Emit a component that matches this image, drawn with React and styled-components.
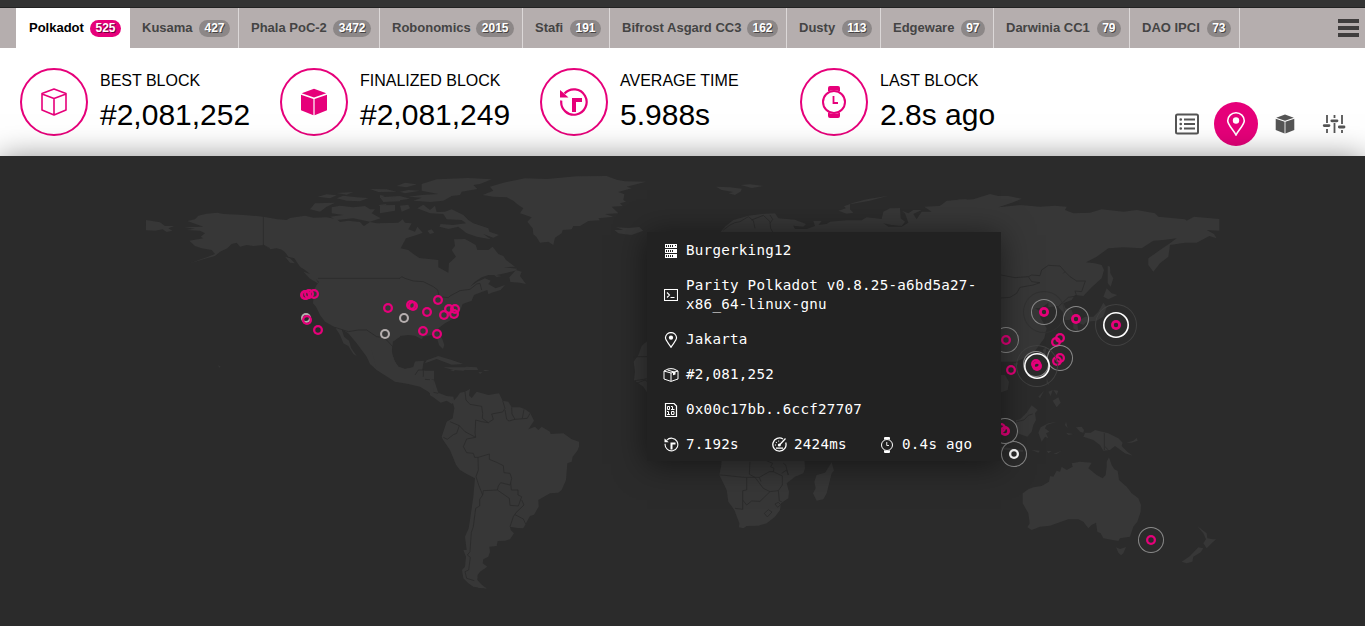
import React from "react";
import styled, { createGlobalStyle, css } from "styled-components";

const PINK = "#e6007a";

const GlobalStyle = createGlobalStyle`
  * { box-sizing: border-box; }
  body {
    margin: 0;
    background: #2b2b2b;
    color: #000;
    font-family: "Liberation Sans", Arial, sans-serif;
    overflow: hidden;
  }
`;

const Page = styled.div`
  display: flex;
  flex-direction: column;
  height: 626px;
  overflow: hidden;
`;

const TopStrip = styled.div`
  flex: 0 0 8px;
  background: #333;
  border-bottom: 1px solid #222;
`;

const ChainBar = styled.nav`
  flex: 0 0 40px;
  display: flex;
  align-items: stretch;
  padding: 0 6px 0 16px;
  background: #b5aeae;
`;

const ChainTab = styled.div`
  display: flex;
  align-items: center;
  justify-content: space-between;
  width: ${(p) => p.$width}px;
  padding: 0 8px 0 12px;
  border-right: 1px solid ${(p) => (p.$active ? "#fff" : "#dcd8d8")};
  background: ${(p) => (p.$active ? "#fff" : "transparent")};
  color: ${(p) => (p.$active ? "#000" : "#444")};
  font-size: 13px;
  font-weight: 700;
  white-space: nowrap;
  ${(p) => p.$active && css`padding-left: 13px;`}
`;

const ChainName = styled.span`
  position: relative;
  top: -1px;
`;

const Count = styled.span`
  height: 17px;
  padding: 0 5.5px;
  border-radius: 9px;
  background: ${(p) => (p.$active ? PINK : "#8c8787")};
  color: #fff;
  font-size: 12px;
  line-height: 16px;
  text-shadow: 1px 1px 0 rgba(0, 0, 0, 0.5);
`;

const MenuButton = styled.div`
  display: flex;
  flex-direction: column;
  justify-content: center;
  gap: 3px;
  width: 21px;
  margin-left: auto;
`;

const MenuLine = styled.span`
  height: 4px;
  background: #3f3d3d;
`;

const Header = styled.header`
  flex: 0 0 108px;
  display: flex;
  align-items: flex-start;
  padding: 20px 9px 0 20px;
  background: #fff;
`;

const Stat = styled.div`
  display: flex;
  gap: 12px;
  width: 260px;
`;

const StatIcon = styled.div`
  display: flex;
  align-items: center;
  justify-content: center;
  width: 68px;
  height: 68px;
  border: 2px solid ${PINK};
  border-radius: 50%;
  color: ${PINK};
`;

const StatText = styled.div`
  padding-top: 4px;
`;

const StatLabel = styled.div`
  font-size: 16px;
  line-height: 18px;
  text-transform: uppercase;
`;

const StatValue = styled.div`
  margin-top: 8px;
  font-size: 30px;
  line-height: 34px;
`;

const ViewTabs = styled.div`
  display: flex;
  gap: 5px;
  margin: 34px 0 0 auto;
`;

const ViewTab = styled.div`
  display: flex;
  align-items: center;
  justify-content: center;
  width: 44px;
  height: 44px;
  border-radius: 50%;
  background: ${(p) => (p.$active ? PINK : "transparent")};
  color: ${(p) => (p.$active ? "#fff" : "#555")};
`;

const MapArea = styled.main`
  position: relative;
  flex: 1;
  background: #2b2b2b;
  box-shadow: rgba(0, 0, 0, 0.5) 0 3px 30px;
`;

const WorldMap = styled.svg`
  display: block;
  width: 1365px;
  height: 470px;
`;

const PIN_COLORS = { gray: "#b5aeae", white: "#fff", pink: PINK };

const Pin = styled.div`
  position: absolute;
  left: ${(p) => p.$x - 5}px;
  top: ${(p) => p.$y - 161}px;
  width: 10px;
  height: 10px;
  border-radius: 50%;
  box-shadow: inset 0 0 0 ${(p) => p.$line}px ${(p) => PIN_COLORS[p.$tone]};
`;

const Pulse = styled.span`
  position: absolute;
  inset: ${(p) => 5 - p.$r}px;
  border-radius: 50%;
  box-shadow: inset 0 0 0 ${(p) => p.$line}px ${(p) => p.$color};
`;

const Details = styled.section`
  position: absolute;
  left: 647px;
  top: 76px;
  width: 354px;
  background: #222;
  color: #fff;
  box-shadow: rgba(0, 0, 0, 0.5) 0 3px 30px;
  font-family: "DejaVu Sans Mono", monospace;
  font-size: 14.2px;
  letter-spacing: 0.26px;
  line-height: 19px;
`;

const DetailRow = styled.div`
  display: flex;
  align-items: center;
  padding: 9px 0 7px 17px;
`;

const DetailCell = styled.div`
  display: flex;
  flex: none;
  align-items: center;
  gap: 8px;
  width: ${(p) => (p.$wide ? "100%" : "108px")};
  white-space: nowrap;
`;

const IconSlot = styled.span`
  display: flex;
  flex: 0 0 14px;
  min-width: 0;
  align-items: center;
  justify-content: center;
  height: 16px;
`;

const Icon = styled.svg`
  flex: none;
  fill: none;
  stroke: currentColor;
`;

const Glyph = ({ size, view = 16, children }) => (
  <Icon width={size} height={size} viewBox={`0 0 ${view} ${view}`}>{children}</Icon>
);

const CubeOutline = () => (
  <Glyph size={28} view={28}>
    <path strokeWidth="1.6" strokeLinejoin="round" d="M14 1 26 5.5V22L14 27 2 22V5.5ZM2 6l12 4.500L26 6M14 10.500V27" />
  </Glyph>
);

const CubeSolid = ({ size = 28 }) => (
  <Glyph size={size} view={28}>
    <path fill="currentColor" stroke="none" d="M14 .8 26.300 5.300 14 9.600 1.700 5.300ZM1 6.700 13.400 11V27.300L1 22.300ZM27 6.700 14.600 11V27.300L27 22.300Z" />
  </Glyph>
);

const AverageIcon = ({ size = 30 }) => (
  <Glyph size={size} view={30}>
    <path strokeWidth="2.200" d="M5.500 6.500A12.700 12.700 0 1 1 2.300 13.500" />
    <path fill="currentColor" stroke="none" d="M1 3 4 5.500 9.500 10.500H1ZM13 11H23V15H17V25H13Z" />
  </Glyph>
);

const WatchIcon = ({ size = 32 }) => (
  <Glyph size={size} view={32}>
    <circle cx="16" cy="16" r="11" strokeWidth="2" />
    <path strokeWidth="1.800" d="M15.500 10V17H20" />
    <path fill="currentColor" stroke="none" d="M10 5.500V2Q10 0 12 0H20Q22 0 22 2V5.500Q16 2.500 10 5.500ZM10 26.500V30Q10 32 12 32H20Q22 32 22 30V26.500Q16 29.500 10 26.500Z" />
  </Glyph>
);

const ListIcon = () => (
  <Glyph size={24} view={24}>
    <rect x="1" y="2.500" width="22" height="19" rx="1.500" strokeWidth="2" />
    <path strokeWidth="2" d="M9 7.500H20M9 12H20M9 16.500H20" />
    <path strokeWidth="2.600" strokeLinecap="round" d="M5.700 7.500H5.800M5.700 12H5.800M5.700 16.500H5.800" />
  </Glyph>
);

const PinIcon = ({ size, line = 1.6 }) => (
  <Glyph size={size} view={24}>
    <path strokeWidth={line} d="M12 23C10 18.500 3.700 13 3.700 8.800A8.300 8 0 0 1 20.300 8.800C20.300 13 14 18.500 12 23Z" />
    <circle cx="12" cy="8.500" r="3.200" fill="currentColor" stroke="none" />
  </Glyph>
);

const SettingsIcon = () => (
  <Glyph size={24} view={24}>
    <path strokeWidth="1.800" d="M5 3V11M5 17V21M12.500 3V6M12.500 11V21M20 3V12M20 18V21" />
    <path strokeWidth="2.800" strokeLinecap="round" d="M2.200 13.600H7M9.800 8.800H15M17.300 15H22" />
  </Glyph>
);

const ServerIcon = () => (
  <Glyph size={14} view={14}>
    <path fill="currentColor" stroke="none" d="M1 0H13V4H1ZM1 5H13V9H1ZM1 10H13V14H1Z" />
    <path stroke="#222" strokeWidth="2" strokeDasharray="1 1" d="M2 2H9M2 7H9M2 12H9" />
    <path stroke="#222" strokeWidth="1" d="M11 1.500H12" />
  </Glyph>
);

const TerminalIcon = () => (
  <Glyph size={14} view={14}>
    <path strokeWidth="1.100" d="M.5 1.500H13.500V12.500H.5ZM3 4.500 5.500 7 3 9.500M6.500 9.500H10.500" />
  </Glyph>
);

const PackageIcon = () => (
  <Icon width="16" height="14" viewBox="0 0 16 14">
    <path d="M1 3 8 5 15 3V11L8 13.400 1 11ZM1 3 5 1 8 .6 11 1 15 3M8 5V13M4.500 2 11 4" />
    <path fill="currentColor" stroke="none" d="M10 4 12.500 3.300V6.500L10 7.300Z" />
  </Icon>
);

const BinaryIcon = () => (
  <Glyph size={14} view={14}>
    <path strokeWidth="1.200" d="M1.500.5H10L12.500 3V13.500H1.500Z" />
    <path strokeWidth="1" d="M3.500 3.500H5.500V6.500H3.500ZM7 3.500H8.500V7M7 6.500H10.500M3 8.500H4.500V12M3 11.500H6M7.500 8.500H10V11.500H7.500Z" />
  </Glyph>
);

const GaugeIcon = () => (
  <Glyph size={15} view={15}>
    <path strokeWidth="1.300" d="M11 2A6.600 6.600 0 1 0 13.700 5.500M4 11.200H11M7.500 8 13.500 1.500" />
    <circle cx="7.300" cy="8" r="1.500" fill="currentColor" stroke="none" />
    <path strokeWidth="1.200" strokeDasharray="1 1.700" d="M3.500 8.500A4 4 0 0 1 9 4.300" />
  </Glyph>
);

const CHAINS = [
  ["Polkadot", 525, 114], ["Kusama", 427, 109], ["Phala PoC-2", 3472, 141],
  ["Robonomics", 2015, 143], ["Stafi", 191, 87], ["Bifrost Asgard CC3", 162, 177],
  ["Dusty", 113, 94], ["Edgeware", 97, 113], ["Darwinia CC1", 79, 136], ["DAO IPCI", 73, 110],
];

const STATS = [
  ["Best Block", "#2,081,252", <CubeOutline />],
  ["Finalized Block", "#2,081,249", <CubeSolid />],
  ["Average Time", "5.988s", <AverageIcon />],
  ["Last Block", "2.8s ago", <WatchIcon />],
];

// Each region has its own origin; its outlines use three units per pixel.
const REGIONS = [
  { x: 140, y: 170,
    land: [
      "M18 150 60 157 75 168 103 168 85 175 97 182 80 186 68 178 45 182 18 181Z",
      "M142 153 165 148 175 137 200 131 232 128 250 132 300 134 370 140 412 148 440 150 450 144 495 137 520 143 560 142 590 148 600 156 625 152 660 156 668 165 672 168 690 156 710 160 780 162 780 500 758 515 755 548 765 575 775 592 780 600 710 600 690 582 680 560 650 520 625 490 605 478 612 500 627 512 634 535 650 558 640 552 625 528 610 520 600 495 585 472 555 455 540 435 528 410 519 400 522 360 530 345 537 336 518 318 495 300 480 290 463 265 445 260 430 240 410 235 390 238 370 225 340 228 320 225 300 230 290 218 275 222 262 235 240 245 225 258 200 265 150 280 200 262 225 252 215 240 185 235 165 228 148 212 190 205 182 200 195 190 180 182 138 180 165 176 132 172 190 170Z",
      "M510 118 525 100 585 98 560 110 540 125ZM575 112 600 107 640 112 675 108 690 118 705 118 695 130 722 145 690 155 640 145 590 150 570 140 610 135 575 130ZM533 80 560 73 590 76 570 85ZM590 85 610 77 650 82 685 84 660 94 620 92ZM590 69 640 66 620 74ZM690 57 740 58 770 65 715 66ZM720 82 780 78 780 94 730 96ZM715 105 740 102 730 115Z",
      "M412 230 435 235 455 252 440 250ZM435 260 450 265 465 280 450 278ZM490 305 520 315 537 342 510 326ZM235 586 242 590 237 593Z",
    ],
    line: "M370 140V225L390 236M534 325H780M585 472 625 485 655 480 680 480 710 500 725 502 740 525 755 530" },
  { x: 380, y: 170,
    land: [
      "M0 160 55 158 68 148 75 158 95 160 85 178 105 185 112 170 128 188 110 195 78 205 62 235 85 240 100 252 118 264 175 270 175 292 205 308 207 280 228 260 215 240 225 228 222 208 255 207 270 215 287 225 292 240 325 240 338 230 355 252 370 258 378 270 405 290 371 292 412 296 405 302 375 310 350 315 325 315 305 322 285 335 270 350 292 335 315 325 332 332 325 342 347 355 375 345 362 360 335 368 325 373 322 360 305 366 282 375 275 392 248 402 242 418 230 440 195 460 175 475 175 490 187 507 193 525 189 537 177 525 170 500 155 495 130 500 125 508 105 497 85 495 60 498 38 515 35 550 45 575 55 590 75 597 100 592 105 575 132 572 125 600 0 600Z",
      "M308 75 340 62 330 50 370 38 435 25 500 27 590 19 680 18 710 29 735 34 798 35 740 50 755 55 715 66 733 73 730 90 738 95 720 100 728 108 695 110 715 130 675 132 700 140 655 145 660 151 625 153 600 168 580 168 575 178 548 180 545 190 525 203 520 225 505 215 480 218 470 202 460 193 458 175 442 155 455 142 420 130 430 115 415 105 400 92 380 82 340 80Z",
      "M125 42 170 28 265 24 335 28 300 42 280 45 292 57 245 65 240 75 215 78 190 92 150 96 100 92 125 83 85 80 125 75 175 72 125 62ZM50 48 75 38 110 43 80 52ZM60 65 85 60 120 62 75 70ZM30 85 60 78 90 86 50 92ZM0 75 15 78 0 85ZM0 106 45 105 45 122 0 130ZM60 107 85 104 90 115 65 125ZM112 115 130 104 150 120 165 107 170 126 195 125 215 118 250 135 265 150 280 160 325 175 328 185 357 195 340 203 310 192 332 208 290 200 260 190 235 170 205 177 178 170 182 162 220 165 258 160 245 150 200 148 190 132 150 130ZM142 182 155 178 163 188 150 192Z",
      "M703 180 730 180 708 172 745 174 778 171 790 182 755 195 730 192 715 190Z",
      "M391 336 388 322 408 300 425 305 420 318 438 342 420 338ZM342 314 364 318 350 321ZM140 571 175 558 215 570 250 582 215 584 170 567 135 580ZM258 590 290 592 295 600 250 600Z",
    ],
    line: "M0 325H60L65 320 75 325 100 333 130 335 160 350 173 360 178 380 205 383 210 378 240 362 270 358 290 342 300 340 305 360M0 495 20 510 38 530" },
  { x: 360, y: 350,
    land: [
      "M35 0H95L100 28 115 50 135 57 160 52 165 35 190 32 187 60 195 62 222 62 222 90 235 128 260 138 280 140 283 155 255 150 225 145 205 125 180 110 145 102 105 95 50 60ZM250 52 330 52 310 62 280 60ZM275 64 292 68ZM355 66 368 67 360 72Z",
    ],
    line: "M165 75 175 60 190 60 190 80M222 90 195 88M220 127 235 130M240 145 250 150" },
  { x: 430, y: 370,
    land: [
      "M0 25 12 32 10 68 28 80 40 82 60 80 72 95 66 102 50 92 32 98 10 82 0 76Z",
      "M68 95 82 80 90 68 105 65 120 57 117 76 125 84 140 65 175 75 207 70 218 92 235 95 245 112 270 112 285 118 300 128 312 152 295 178 315 170 325 180 335 170 360 185 362 192 400 190 425 208 447 215 447 230 442 242 428 260 425 275 412 280 408 330 395 360 385 368 360 370 325 390 326 410 312 434 300 438 288 460 280 475 263 474 240 470 242 480 252 490 240 508 225 512 203 513 200 528 178 530 180 545 175 560 160 568 158 580 172 590 150 605 143 615 142 630 153 642 170 656 130 650 115 640 100 625 96 600 105 590 108 560 100 540 110 540 105 500 116 475 120 450 130 380 135 325 110 312 90 300 78 284 60 240 38 208 35 200 50 155 68 145 73 115Z",
      "M60 0 75 0 70 4ZM160 0 180 0 165 4ZM135 634 170 655 145 654Z",
    ],
    line: "M105 65 108 90 120 103 155 109 158 130 157 145 175 158 155 155 137 150 136 175 135 188 137 202 105 185 88 167 60 155M88 167 80 190 70 194 52 208 40 202M137 202 110 207 100 230 110 248 130 250 134 262 145 262 178 252 178 268 200 277 220 287 222 308 240 310 245 325 242 338 240 345 212 338 205 348 202 360 160 362 158 375 146 345 138 320 145 300 144 262M202 360 238 385 240 406 265 408 275 380 264 375 264 360 244 360 242 338M275 390 282 405 258 428 250 440 240 470M255 434 280 447 287 462M158 375 149 388 149 408 137 415 130 470 124 487 120 545 112 555 121 562 116 600 105 605 110 625 133 632M175 158 190 148 185 132 218 126 225 115 218 92M225 120 230 148 237 153 255 148 246 132 245 112M255 148 292 145 300 130M282 118 277 145" },
  { x: 600, y: 330,
    land: ["M145 30 125 48 115 75 101 95 105 125 102 150 130 170 150 200V30Z"],
    line: "M145 80H101M110 160 135 150 150 160M105 152 150 145" },
  { x: 640, y: 440,
    land: [
      "M245 55 244 75 238 105 248 125 260 150 265 185 283 210 298 250 297 262 310 265 320 258 355 257 380 250 405 230 420 210 423 190 445 175 447 155 440 130 465 110 490 100 495 85 493 55Z",
      "M575 67 582 92 575 100 560 160 550 178 530 182 519 160 527 145 523 125 530 105 555 98Z",
    ],
    line: "M238 105 255 106 310 112 358 112 388 95 400 95 402 85 392 80 398 70 375 60M330 65 328 103 345 112M320 114V150L308 152V208L285 205M308 180 320 195 335 183 360 184 390 155 415 152 418 183 425 185M345 112 370 145 390 155M358 112 363 125M400 95 427 108 427 135 415 152M425 100 440 90 445 105 437 75 430 70M373 220 385 209 396 216 382 231ZM405 192 415 187 422 194 413 202Z" },
  { x: 680, y: 170,
    land: [
      "M108 50 150 52 185 56 183 64 165 75 145 70 160 66 125 60ZM182 45 210 43 250 48 215 54Z",
      "M118 190 135 170 160 150 205 137 245 132 285 130 295 145 345 149 378 162 370 170 340 167 345 177 375 177 375 190ZM355 177 380 177 405 168 400 153 425 153 415 165 440 162 450 155 500 151 545 151 560 142 605 147 610 125 630 115 660 114 662 145 675 155 665 168 635 165 610 160 625 170 665 170 685 158 675 130 665 122 685 130 700 120 725 120 700 132 710 148 725 125 755 125 733 110 780 108 800 95 840 88 860 88 860 190H360Z",
      "M475 122 498 115 492 109 520 98 560 88 625 77 570 92 510 103 510 118 520 128 500 131Z",
    ],
    line: "M130 180 150 165 165 158 180 155 205 140 220 152 225 175M215 150 250 136 270 155 272 175 280 190M270 135 278 148 270 160" },
  { x: 940, y: 170,
    land: [
      "M0 108 20 92 100 88 150 72 175 78 205 78 245 86 220 97 175 112 240 105 300 110 345 107 380 110 375 120 400 130 450 128 485 118 550 125 590 120 645 130 655 140 735 148 740 152 762 140 838 147V182L800 180 822 192 830 205 808 198 770 218 735 218 690 225 685 260 660 280 640 305 625 285 625 265 660 240 690 220 710 205 670 210 640 212 605 235 550 232 505 235 470 260 438 277 465 280 485 285 492 300 485 325 455 352 430 378 405 375 395 390 370 400 377 415 395 420 402 440 388 450 375 450 368 425 352 408 325 412 325 398 305 413 285 415 310 430 300 440 320 475 313 505 280 550 240 570 228 575 183 575 0 575Z",
      "M503 287 510 290 511 310 520 325 512 350 503 340ZM500 355 515 370 532 375 505 388 490 380ZM490 398 500 412 490 440 470 452 440 455 430 465 410 456 435 440 460 440 475 425ZM400 455 412 460 415 485 400 475ZM308 540 320 530 315 560ZM220 580 235 580 226 592Z",
    ],
    line: "M183 315 225 323 265 320 275 315 300 317 305 300 325 286 360 288 375 305 390 320 410 333 436 333 425 365 405 363 410 378 385 382 355 410M265 320 275 335 300 338 280 345 240 352 230 370 210 382 183 384M375 305 370 310" },
  { x: 990, y: 370,
    land: [
      "M30 15 45 15 57 35 53 60 30 68ZM78 150 90 148 110 128 125 106 143 120 135 130 138 150 130 165 125 185 112 200 82 190 78 170ZM152 172 175 160 200 155 170 165 165 175 178 185 168 190 175 205 165 200 155 215 145 188ZM258 172 275 170 282 180 280 188 302 188 315 180 355 190 385 205 398 218 395 228 412 245 428 257 405 250 375 228 360 240 340 242 330 225 310 210 280 200 285 190 270 185ZM410 218 430 212 440 204 443 212 425 218ZM30 230 60 234 100 240 98 246 35 238ZM125 240 150 242 145 248ZM170 242 185 244 175 250ZM190 252 215 242 200 252ZM170 25 178 45 170 40ZM188 92 205 82 212 98 200 112ZM175 65 188 60 182 78ZM145 80 162 62 150 85ZM190 60 205 62 200 75ZM228 155 233 175 225 165ZM228 188 250 192 235 195Z",
      "M98 370 115 358 130 352 155 348 177 335 180 318 190 320 200 302 210 305 215 290 230 300 248 290 245 280 270 275 305 278 295 295 320 315 338 325 347 315 350 290 350 275 357 262 365 285 373 298 383 303 387 330 410 350 425 370 445 385 453 405 452 425 442 455 430 470 420 500 390 505 385 513 340 505 332 490 322 485 318 458 305 465 295 475 280 455 265 448 235 448 205 458 180 467 150 470 125 480 112 472 119 460 115 430 98 400Z",
      "M378 532 390 537 408 531 400 550 393 556 385 548ZM622 468 640 482 650 490 652 505 668 508 678 508 665 520 650 535 640 520 648 508 640 490ZM625 532 640 535 632 547 610 560 607 575 590 580 575 575 600 558Z",
    ],
    line: "M343 190V240M80 155 102 150 115 136 128 132M345 230 355 240" },
];

const PINS = [
  { x: 304.5, y: 294.5 }, { x: 306, y: 294.5 }, { x: 309, y: 294 }, { x: 314, y: 294 },
  { x: 306, y: 318, tone: "gray" }, { x: 307, y: 320 }, { x: 318, y: 330 },
  { x: 388, y: 308 }, { x: 385, y: 334, tone: "gray" }, { x: 404, y: 318, tone: "gray" },
  { x: 411, y: 305 }, { x: 413, y: 306 }, { x: 427, y: 312 }, { x: 438, y: 300 },
  { x: 444, y: 315 }, { x: 449, y: 309 }, { x: 455, y: 309 }, { x: 454, y: 314 },
  { x: 423, y: 331 }, { x: 437, y: 334 },
  { x: 1044, y: 312, bold: true, ring: "far" }, { x: 1076, y: 319, bold: true, ring: "near" },
  { x: 1116, y: 325, bold: true, ring: "bright" }, { x: 1060, y: 338 }, { x: 1056, y: 342 },
  { x: 1060, y: 358, ring: "near" }, { x: 1057, y: 361 },
  { x: 1036, y: 364, ring: "near" }, { x: 1037, y: 366, bold: true, ring: "bright" },
  { x: 1011, y: 370 }, { x: 1006, y: 340, ring: "near" },
  { x: 1001, y: 428 }, { x: 1005, y: 431, bold: true, ring: "near" },
  { x: 1014, y: 454, tone: "white", ring: "near" }, { x: 1151, y: 540, ring: "near" },
];

function MapPin({ x, y, tone = "pink", bold, ring }) {
  const bright = ring === "bright";
  return (
    <Pin $x={x} $y={y} $tone={tone} $line={bold ? 2.8 : tone === "gray" ? 2.1 : 2.3}>
      {ring && <Pulse $r={13} $line={bright ? 1.6 : 1} $color={bright ? "#fff" : "#898989"} />}
      {(bright || ring === "far") && <Pulse $r={21} $line={1} $color={bright ? "#414141" : "#313131"} />}
    </Pin>
  );
}

const Detail = ({ icon, wide, children }) => (
  <DetailCell $wide={wide}>
    <IconSlot>{icon}</IconSlot>
    <span>{children}</span>
  </DetailCell>
);

export default function App() {
  return (
    <Page>
      <GlobalStyle />
      <TopStrip />
      <ChainBar>
        {CHAINS.map(([name, count, width], i) => (
          <ChainTab key={name} $width={width} $active={i === 0}>
            <ChainName>{name}</ChainName>
            <Count $active={i === 0}>{count}</Count>
          </ChainTab>
        ))}
        <MenuButton>
          <MenuLine /><MenuLine /><MenuLine />
        </MenuButton>
      </ChainBar>
      <Header>
        {STATS.map(([label, value, icon]) => (
          <Stat key={label}>
            <StatIcon>{icon}</StatIcon>
            <StatText>
              <StatLabel>{label}</StatLabel>
              <StatValue>{value}</StatValue>
            </StatText>
          </Stat>
        ))}
        <ViewTabs>
          <ViewTab><ListIcon /></ViewTab>
          <ViewTab $active><PinIcon size={24} /></ViewTab>
          <ViewTab><CubeSolid size={20} /></ViewTab>
          <ViewTab><SettingsIcon /></ViewTab>
        </ViewTabs>
      </Header>
      <MapArea>
        <WorldMap viewBox="0 156 1365 470">
          {REGIONS.map((r) => (
            <g key={`${r.x}-${r.y}`} transform={`translate(${r.x} ${r.y}) scale(.33333)`}>
              <path d={r.land.join("")} fill="#373737" />
              <path d={r.line} fill="none" stroke="#2a2a2a" strokeWidth="2.500" />
            </g>
          ))}
        </WorldMap>
        {PINS.map((pin, i) => <MapPin key={i} {...pin} />)}
        <Details>
          <DetailRow><Detail wide icon={<ServerIcon />}>Burgerking12</Detail></DetailRow>
          <DetailRow>
            <Detail wide icon={<TerminalIcon />}>Parity Polkadot v0.8.25-a6bd5a27-<br />x86_64-linux-gnu</Detail>
          </DetailRow>
          <DetailRow><Detail wide icon={<PinIcon size={16} line={1.8} />}>Jakarta</Detail></DetailRow>
          <DetailRow><Detail wide icon={<PackageIcon />}>#2,081,252</Detail></DetailRow>
          <DetailRow><Detail wide icon={<BinaryIcon />}>0x00c17bb..6ccf27707</Detail></DetailRow>
          <DetailRow>
            <Detail icon={<AverageIcon size={15} />}>7.192s</Detail>
            <Detail icon={<GaugeIcon />}>2424ms</Detail>
            <Detail icon={<WatchIcon size={16} />}>0.4s ago</Detail>
          </DetailRow>
        </Details>
      </MapArea>
    </Page>
  );
}
